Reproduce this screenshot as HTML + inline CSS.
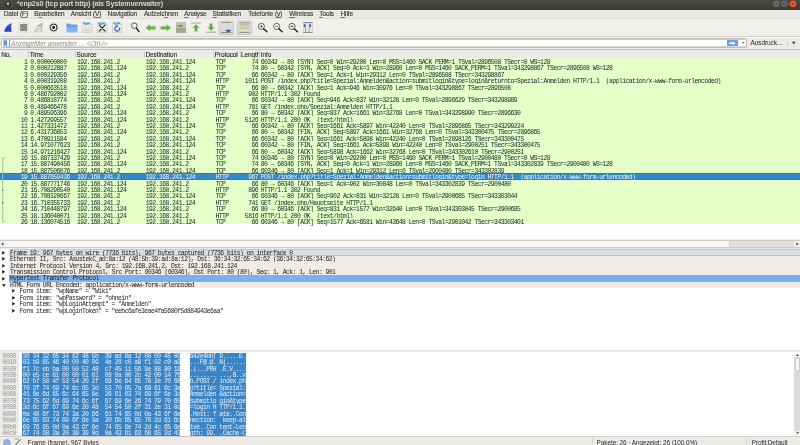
<!DOCTYPE html>
<html><head><meta charset="utf-8"><style>
html,body{margin:0;padding:0;width:800px;height:445px;overflow:hidden;background:#edebe7;position:relative;font-family:"Liberation Sans",sans-serif;}
.abs{position:absolute;}
#title{position:absolute;left:0;top:0;width:800px;height:9.6px;background:linear-gradient(#4b4a46,#3c3b37);}
#title .t{position:absolute;left:16.9px;top:-0.4px;font:bold 7.1px "Liberation Sans";letter-spacing:-0.1px;color:#dcd8cf;white-space:nowrap;line-height:8px;}
#menu{position:absolute;left:0;top:9.6px;width:800px;height:8.8px;background:#ebe9e5;}
#mline{position:absolute;left:0;top:18.1px;width:800px;height:1px;background:#e2dfda;}
#menu span{position:absolute;top:0.4px;font:6.5px "Liberation Sans";letter-spacing:-0.12px;color:#303030;white-space:nowrap;line-height:7px;-webkit-text-stroke:0.1px #303030;}
#menu u{text-decoration:underline;text-decoration-thickness:0.4px;text-underline-offset:0.6px;text-decoration-color:#777;}
#toolbar{position:absolute;left:0;top:19px;width:800px;height:17.2px;background:linear-gradient(#f3f2ef,#efedea);}
#tbline{position:absolute;left:0;top:36.1px;width:800px;height:1px;background:#d3d0cb;box-shadow:0 1px 0 #f8f6f3;}
#filter{position:absolute;left:1.0px;top:38.4px;width:745.5px;height:9.8px;box-sizing:border-box;border:1px solid #bfbcb7;background:#fff;border-radius:1.5px;box-shadow:inset 0 1px 0 #d2cfca,inset 0 -1px 0 #dcd9d4;}
#hdrline{position:absolute;left:0;top:49.2px;width:800px;height:1px;background:#c9c6c1;}
#hdr{position:absolute;left:0;top:50.2px;width:800px;height:7.6px;background:#edebe7;border-bottom:0.6px solid #cfccc7;}
#hdr span{position:absolute;top:0.4px;font:6.5px "Liberation Sans";letter-spacing:-0.09px;color:#262626;white-space:nowrap;line-height:7px;-webkit-text-stroke:0.1px #262626;}
#hdr i{position:absolute;top:0;width:0.5px;height:7.6px;background:#d3d0cb;}
#plist{position:absolute;left:0;top:58.0px;width:800px;height:181.4px;background:#fff;overflow:hidden;}
.r{position:absolute;left:0;width:800px;height:6.404px;background:#e4ffc7;color:#12272e;font:6.4px "Liberation Mono";letter-spacing:-0.549px;line-height:6.404px;white-space:nowrap;}
.r span{position:absolute;top:0;}
.r.sel{background:#348ac9;color:#e6f0fa;box-shadow:inset 0 1px 0 #2a7bc3,inset 0 -1px 0 #2a7bc3;}
.c0{right:772.8px;text-align:right;}
.c1{left:30.3px;}
.c2{left:77px;}
.c3{left:145.8px;}
.c4{left:215.4px;}
.c5{right:542px;text-align:right;}
.c6{left:260.8px;}
#hscroll{position:absolute;left:0;top:239.7px;width:800px;height:8.6px;background:#f0eeeb;border-top:0.5px solid #d0cdc8;box-sizing:border-box;}
#details{position:absolute;left:0;top:248.6px;width:800px;height:101.2px;background:#fff;overflow:hidden;}
.d{position:absolute;left:0;width:800px;height:6.45px;font:6.4px "Liberation Mono";letter-spacing:-0.549px;line-height:6.45px;color:#1e1e1e;white-space:nowrap;}
.d .bg{position:absolute;left:9px;right:0;top:0;bottom:0;}
.d .tx{position:absolute;left:10px;top:0;}
.d .ar{position:absolute;left:2.2px;top:1.6px;width:0;height:0;border-left:3px solid #222;border-top:1.6px solid transparent;border-bottom:1.6px solid transparent;}
#splitter{position:absolute;left:0;top:349.8px;width:800px;height:1.7px;background:#e6e3de;}
#hex{position:absolute;left:0;top:351.5px;width:800px;height:84.5px;background:#fff;overflow:hidden;}
#hexoff{position:absolute;left:0;top:0;width:18.9px;height:84.5px;background:#edebe8;}
.hr{position:absolute;left:0;width:794px;height:6.45px;font:6.4px "Liberation Mono";letter-spacing:-0.549px;line-height:6.45px;white-space:nowrap;}
.ho{position:absolute;left:2.6px;color:#979797;}
.hx{position:absolute;left:21.8px;width:157.2px;background:#3b84c6;color:#e3edf8;padding-left:0.8px;}
.ha{position:absolute;left:189.6px;width:55.8px;background:#3b84c6;color:#e3edf8;padding-left:0.2px;}
#vscroll{position:absolute;left:794.2px;top:352.8px;width:5.8px;height:82.7px;background:#dcdad5;}
#status{position:absolute;left:0;top:436px;width:800px;height:9px;background:#edebe7;border-top:0.6px solid #d3d0cb;box-sizing:border-box;}
#status span{position:absolute;top:1.5px;font:6.4px "Liberation Sans";letter-spacing:-0.06px;color:#2c2c2c;white-space:nowrap;line-height:7px;}
#root{position:absolute;left:0;top:0;width:800px;height:445px;will-change:transform;overflow:hidden;}
#filter .ph{position:absolute;left:9.3px;top:0.5px;font:italic 6.3px "Liberation Sans";color:#8a8a8a;white-space:nowrap;line-height:7px;}
.ausd{left:750.6px;top:39.1px;font:6.4px "Liberation Sans";letter-spacing:-0.05px;color:#262626;white-space:nowrap;line-height:7px;}
.d .ar.dn{left:1.6px;top:2.2px;border-left:1.7px solid transparent;border-right:1.7px solid transparent;border-top:2.4px solid #222;border-bottom:0;}
.r span{padding-top:2.0px;}
.hr span{white-space:pre;}
.hr span{padding-top:1.0px;}
.d .tx{padding-top:1.2px;white-space:pre;}
.r span{white-space:pre;}

</style></head><body>
<div id="root">
<div id="title">
 <svg class="abs" style="left:4.5px;top:1.2px" width="6" height="6" viewBox="0 0 6 6"><circle cx="3" cy="3" r="2.6" fill="#2e2d2a"/><circle cx="3" cy="2.6" r="1.2" fill="#d8d5cf"/></svg>
 <div class="t">*enp2s0 (tcp port http) (als Systemverwalter)</div>
 <svg class="abs" style="left:770px;top:0" width="30" height="9" viewBox="770 0 30 9"><circle cx="776.4" cy="3.75" r="3.35" fill="#6a6965" stroke="#5a5955" stroke-width="0.3"/><rect x="774.9" y="3.5" width="3" height="0.55" fill="#3f3e3a"/><circle cx="784.4" cy="3.75" r="3.35" fill="#6a6965" stroke="#5a5955" stroke-width="0.3"/><rect x="783.3" y="2.6" width="2.2" height="2.3" fill="none" stroke="#3f3e3a" stroke-width="0.5"/><circle cx="792.9" cy="3.75" r="3.35" fill="#ee5a2c" stroke="#d84c20" stroke-width="0.3"/><path d="M791.6 2.45 L794.2 5.05 M794.2 2.45 L791.6 5.05" stroke="#5a2010" stroke-width="0.6"/></svg>
</div>
<div id="menu">
 <span style="left:3.75px">Datei (<u>F</u>)</span>
 <span style="left:34.25px">B<u>e</u>arbeiten</span>
 <span style="left:70.75px">Ansicht (<u>V</u>)</span>
 <span style="left:107.6px">Navigation</span>
 <span style="left:143.9px">Aufzeic<u>h</u>nen</span>
 <span style="left:184.25px"><u>A</u>nalyse</span>
 <span style="left:212.5px"><u>S</u>tatistiken</span>
 <span style="left:248.25px">Telefonie (<u>y</u>)</span>
 <span style="left:289.25px"><u>W</u>ireless</span>
 <span style="left:319.25px"><u>T</u>ools</span>
 <span style="left:340.5px"><u>H</u>ilfe</span>
</div>
<div id="toolbar"></div>
<div id="mline"></div>
<svg class="abs" style="left:0;top:18.9px" width="330" height="17.4" viewBox="0 18.9 330 17.4">
 <defs>
  <linearGradient id="gfin" x1="0" y1="0" x2="0" y2="1"><stop offset="0" stop-color="#3f63e6"/><stop offset="1" stop-color="#1f36b8"/></linearGradient>
  <linearGradient id="gfold" x1="0" y1="0" x2="0" y2="1"><stop offset="0" stop-color="#5d9ee6"/><stop offset="1" stop-color="#8fc0f4"/></linearGradient>
  <linearGradient id="gdoc" x1="0" y1="0" x2="0" y2="1"><stop offset="0" stop-color="#fbfaf4"/><stop offset="1" stop-color="#e4e2d4"/></linearGradient>
  <linearGradient id="gbtn" x1="0" y1="0" x2="0" y2="1"><stop offset="0" stop-color="#e2e0dc"/><stop offset="1" stop-color="#d6d4cf"/></linearGradient>
 </defs>
 <!-- shark fin -->
 <path d="M3.75 32 C4.3 27 8 23.3 12.4 22.6 C11.2 25.5 11.1 29 12 32 Z" fill="url(#gfin)" stroke="#f4f2ea" stroke-width="0.7"/>
 <!-- stop -->
 <rect x="18.5" y="22.3" width="9.6" height="10.2" rx="1" fill="#eceae6" stroke="#d6d4cf" stroke-width="0.5"/>
 <rect x="20.1" y="23.9" width="6.9" height="7.1" fill="#8b8a87"/>
 <!-- restart fin (grey) -->
 <linearGradient id="grst" x1="0" y1="0" x2="1" y2="1"><stop offset="0" stop-color="#a9a7a3"/><stop offset="1" stop-color="#d2d0cc"/></linearGradient>
 <path d="M34 32.4 C34.6 27.5 38.3 23.4 43.5 22.1 C42.2 25.5 42.1 29 42.9 32.4 Z" fill="url(#grst)" stroke="#e9e7e3" stroke-width="0.6"/>
 <circle cx="38.5" cy="29.1" r="1.65" fill="none" stroke="#fbfbfb" stroke-width="1.1"/>
 <circle cx="38.6" cy="29.3" r="0.55" fill="#8e8c88"/>
  <!-- options -->
 <circle cx="53.6" cy="27.4" r="4.9" fill="#d3d1cd"/>
 <circle cx="53.6" cy="27.4" r="3.35" fill="#fafafa" stroke="#222" stroke-width="1.0"/>
 <circle cx="53.6" cy="27.4" r="1.45" fill="#151515"/>
 <!-- sep -->
 <rect x="62.2" y="22.5" width="0.5" height="10" fill="#dad7d2"/>
 <!-- folder -->
 <path d="M66.5 23.6 h3.6 l0.8 1 h6.3 v7.6 h-10.7 z" fill="url(#gfold)" stroke="#6ea4e2" stroke-width="0.3"/>
 <rect x="66.5" y="25.6" width="10.7" height="0.5" fill="#4d8fd8"/>
 <!-- doc 1 -->
 <path d="M82.3 22.2 h7.6 l2 2 v8.3 h-9.6 z" fill="url(#gdoc)" stroke="#c2c0b5" stroke-width="0.5"/>
 <path d="M82.6 22.45 h7.2 l1.8 1.8 v0.5 c-1.2 0.1 -2 -0.7 -3.2 -0.6 c-1 0.1 -1.2 0.7 -2.1 0.7 c-0.9 0 -1.6 -0.5 -2.5 -0.4 z" fill="#4f9fe6"/>
 <path d="M85.0 22.45 l1 1.3 l1 -1.3 z" fill="#eaf4fc"/>
 <path d="M89.89999999999999 22.2 v2 h2" fill="#f4f3ec" stroke="#c2c0b5" stroke-width="0.4"/>
 <g fill="#c9c7bb"><rect x="83.6" y="26.5" width="2.2" height="0.5"/><rect x="86.4" y="26.5" width="3.6" height="0.5"/><rect x="83.6" y="28.4" width="3.2" height="0.5"/><rect x="87.4" y="28.4" width="2.6" height="0.5"/><rect x="83.6" y="30.3" width="2.6" height="0.5"/><rect x="86.8" y="30.3" width="3.2" height="0.5"/></g>
 <!-- doc close -->
 <path d="M97.3 22.2 h7.6 l2 2 v8.3 h-9.6 z" fill="url(#gdoc)" stroke="#c2c0b5" stroke-width="0.5"/>
 <path d="M97.6 22.45 h7.2 l1.8 1.8 v0.5 c-1.2 0.1 -2 -0.7 -3.2 -0.6 c-1 0.1 -1.2 0.7 -2.1 0.7 c-0.9 0 -1.6 -0.5 -2.5 -0.4 z" fill="#4f9fe6"/>
 <path d="M100.0 22.45 l1 1.3 l1 -1.3 z" fill="#eaf4fc"/>
 <path d="M104.89999999999999 22.2 v2 h2" fill="#f4f3ec" stroke="#c2c0b5" stroke-width="0.4"/>
 <path d="M99.3 25.1 L105 31.1 M105 25.1 L99.3 31.1" stroke="#1c1c1c" stroke-width="1.05" stroke-linecap="round"/>
 <!-- doc reload -->
 <path d="M112.5 22.2 h7.6 l2 2 v8.3 h-9.6 z" fill="url(#gdoc)" stroke="#c2c0b5" stroke-width="0.5"/>
 <path d="M112.8 22.45 h7.2 l1.8 1.8 v0.5 c-1.2 0.1 -2 -0.7 -3.2 -0.6 c-1 0.1 -1.2 0.7 -2.1 0.7 c-0.9 0 -1.6 -0.5 -2.5 -0.4 z" fill="#4f9fe6"/>
 <path d="M115.2 22.45 l1 1.3 l1 -1.3 z" fill="#eaf4fc"/>
 <path d="M120.1 22.2 v2 h2" fill="#f4f3ec" stroke="#c2c0b5" stroke-width="0.4"/>
 <path d="M117.03 26.01 A2.5 2.5 0 1 0 119.52 27.44" fill="none" stroke="#2f5fb3" stroke-width="1.1"/>
 <path d="M116.73 24.81 l1.9 1.2 l-1.9 1.2 z" fill="#2f5fb3"/>
 <!-- sep -->
 <rect x="126.2" y="22.5" width="0.5" height="10" fill="#dad7d2"/>
 <!-- find -->
 <circle cx="134.3" cy="25.6" r="2.8" fill="#f4f4f4" stroke="#2a2a2a" stroke-width="0.8"/>
 <path d="M136.3 27.9 L138.9 31.6" stroke="#1a1a1a" stroke-width="1.3" stroke-linecap="round"/>
 <!-- back -->
 <path d="M145.5 27.7 l4.4 -3.5 v1.9 h5.7 v3.2 h-5.7 v1.9 z" fill="#5cbd14" stroke="#c4c0cc" stroke-width="0.7" stroke-linejoin="round"/>
 <!-- forward -->
 <path d="M170.9 27.7 l-4.4 -3.5 v1.9 h-5.7 v3.2 h5.7 v1.9 z" fill="#5cbd14" stroke="#c4c0cc" stroke-width="0.7" stroke-linejoin="round"/>
 <!-- goto -->
 <rect x="176" y="22.2" width="10.1" height="10.8" fill="#a9a8a4"/>
 <rect x="176.4" y="22.6" width="9.3" height="5" fill="#c3c2be"/>
 <rect x="176.5" y="29.2" width="9" height="0.4" fill="#8f8e8a"/>
 <rect x="176.5" y="31" width="9" height="0.4" fill="#9b9a96"/>
 <path d="M183.2 25.9 l-2.6 -2.5 v1.4 h-3.8 v2.3 h3.8 v1.4 z" fill="#55bb14" stroke="#c8c2d4" stroke-width="0.6" stroke-linejoin="round"/>
 <rect x="184.2" y="25" width="1.9" height="1.6" fill="#f0d848"/>
 <!-- first -->
 <rect x="191.1" y="22.5" width="9.8" height="0.9" fill="#9b9a96"/>
 <path d="M196 24.3 l3.6 3.4 h-2.2 v3.7 h-2.8 v-3.7 h-2.2 z" fill="#4fb814" stroke="#c8c2d4" stroke-width="0.8" stroke-linejoin="round"/>
 <!-- last -->
 <rect x="206" y="31.6" width="10.2" height="0.9" fill="#9b9a96"/>
 <path d="M211.1 30.6 l3.6 -3.4 h-2.2 v-3.7 h-2.8 v3.7 h-2.2 z" fill="#4fb814" stroke="#c8c2d4" stroke-width="0.8" stroke-linejoin="round"/>
 <!-- autoscroll pressed -->
 <rect x="218.8" y="20.8" width="14.8" height="13.8" rx="1.2" fill="url(#gbtn)" stroke="#bebcb7" stroke-width="0.6"/>
 <rect x="221.2" y="22.2" width="10" height="0.6" fill="#555"/>
 <rect x="221.2" y="32" width="10" height="0.6" fill="#555"/>
 <path d="M225.7 29.7 h5.4 l-1.3 2.1 h-2.8 z" fill="#2a5fb5"/>
 <!-- colorize pressed -->
 <rect x="237" y="20.8" width="14.9" height="13.8" rx="1.2" fill="url(#gbtn)" stroke="#bebcb7" stroke-width="0.6"/>
 <rect x="239.4" y="22.3" width="10.4" height="0.8" fill="#7c8a88"/>
 <rect x="239.4" y="23.1" width="10.4" height="1.8" fill="#f2a6a0"/>
 <rect x="239.4" y="24.9" width="10.4" height="0.9" fill="#8ec4f2"/>
 <rect x="239.4" y="25.8" width="10.4" height="1.6" fill="#b9ef9e"/>
 <rect x="239.4" y="27.4" width="10.4" height="1.0" fill="#a9c0ee"/>
 <rect x="239.4" y="28.4" width="10.4" height="1.0" fill="#c6aee4"/>
 <rect x="239.4" y="29.4" width="10.4" height="2.4" fill="#efdf9e"/>
 <rect x="239.4" y="31.8" width="10.4" height="0.8" fill="#767f88"/>
 <!-- zoom in / out / reset -->
 <g fill="#f6f6f6" stroke="#2a2a2a" stroke-width="0.7">
  <circle cx="261.4" cy="26.3" r="3.1"/>
  <circle cx="276.7" cy="26.3" r="3.1"/>
  <circle cx="292" cy="26.3" r="3.1"/>
 </g>
 <g stroke="#1a1a1a" stroke-width="1.3" stroke-linecap="round">
  <path d="M263.6 28.6 L267 31.7"/><path d="M278.9 28.6 L282.3 31.7"/><path d="M294.2 28.6 L297.6 31.7"/>
 </g>
 <g stroke="#333" stroke-width="0.6">
  <path d="M259.7 26.3 h3.4 M261.4 24.6 v3.4"/><path d="M275 26.3 h3.4"/>
 </g>
 <rect x="290.6" y="25.6" width="2.8" height="1.4" fill="#555"/>
 <!-- resize columns -->
 <rect x="303" y="22.1" width="9.9" height="10.7" fill="#ebe9e5"/>
 <rect x="303" y="22.1" width="9.9" height="0.8" fill="#7d7c79"/>
 <rect x="303" y="32" width="9.9" height="0.8" fill="#7d7c79"/>
 <rect x="303" y="22.1" width="0.4" height="10.7" fill="#b5b4b0"/>
 <rect x="312.5" y="22.1" width="0.4" height="10.7" fill="#b5b4b0"/>
 <rect x="305.1" y="22.1" width="0.7" height="10.7" fill="#8a8986"/>
 <rect x="308.9" y="22.1" width="0.7" height="10.7" fill="#8a8986"/>
 <path d="M303.8 24 h0.6 a1.6 1.6 0 0 1 0 3.1 h-0.6 z" fill="#2f66c0"/>
 <path d="M311.1 24 h-0.6 a1.6 1.6 0 0 0 0 3.1 h0.6 z" fill="#2f66c0"/>
</svg>

<div id="tbline"></div>
<div id="filter">
 <div class="abs" style="left:7.1px;top:0.2px;width:0.7px;height:7.4px;background:#9d9a95"></div>
 <svg class="abs" style="left:0.6px;top:0.5px" width="5" height="7" viewBox="0 0 5 7"><path d="M0.5 0.2 h3.6 v6.3 l-1.8 -1.3 l-1.8 1.3 z" fill="#5d9ae0"/></svg>
 <span class="ph">Anzeigefilter anwenden … &lt;Ctrl-/&gt;</span>
 <div class="abs" style="left:725px;top:0.8px;width:10.8px;height:6.2px;background:#6d9fdc;border-radius:0.6px"></div>
 <svg class="abs" style="left:727px;top:1.7px" width="7" height="4.5" viewBox="0 0 7 4.5"><path d="M0.3 1.5 h3.6 v-1.2 l2.6 1.95 l-2.6 1.95 v-1.2 h-3.6 z" fill="#fff"/></svg>
 <svg class="abs" style="left:740.3px;top:2.9px" width="3" height="2" viewBox="0 0 3 2"><path d="M0 0 h2.6 l-1.3 1.6 z" fill="#444"/></svg>
</div>
<span class="abs ausd">Ausdruck…</span>
<div class="abs" style="left:787.4px;top:41px;width:0.5px;height:5px;background:#d3d0cb"></div>
<svg class="abs" style="left:792.3px;top:41.2px" width="3.4" height="3.4" viewBox="0 0 3.4 3.4"><path d="M1.7 0.2 v3 M0.2 1.7 h3" stroke="#333" stroke-width="0.9"/></svg>
<div id="hdrline"></div>
<div id="hdr">
 <span style="left:1.2px">No.</span><i style="left:28.2px"></i>
 <span style="left:29.7px">Time</span><i style="left:74.6px"></i>
 <span style="left:76.6px">Source</span><i style="left:144.4px"></i>
 <span style="left:145.4px">Destination</span><i style="left:213px"></i>
 <span style="left:214.6px">Protocol</span><i style="left:239.6px"></i>
 <span style="left:241px">Length</span><i style="left:259.4px"></i>
 <span style="left:260.8px">Info</span>
</div>
<div id="plist">
<div class="r" style="top:0.00px"><span class="c0">1</span><span class="c1">0.000000000</span><span class="c2">192.168.241.2</span><span class="c3">192.168.241.124</span><span class="c4">TCP</span><span class="c5">74</span><span class="c6">60342 → 80 [SYN] Seq=0 Win=29200 Len=0 MSS=1460 SACK_PERM=1 TSval=2896508 TSecr=0 WS=128</span></div>
<div class="r" style="top:6.40px"><span class="c0">2</span><span class="c1">0.000212887</span><span class="c2">192.168.241.124</span><span class="c3">192.168.241.2</span><span class="c4">TCP</span><span class="c5">74</span><span class="c6">80 → 60342 [SYN, ACK] Seq=0 Ack=1 Win=28960 Len=0 MSS=1460 SACK_PERM=1 TSval=343298867 TSecr=2896508 WS=128</span></div>
<div class="r" style="top:12.81px"><span class="c0">3</span><span class="c1">0.000229356</span><span class="c2">192.168.241.2</span><span class="c3">192.168.241.124</span><span class="c4">TCP</span><span class="c5">66</span><span class="c6">60342 → 80 [ACK] Seq=1 Ack=1 Win=29312 Len=0 TSval=2896508 TSecr=343298867</span></div>
<div class="r" style="top:19.21px"><span class="c0">4</span><span class="c1">0.000319208</span><span class="c2">192.168.241.2</span><span class="c3">192.168.241.124</span><span class="c4">HTTP</span><span class="c5">1011</span><span class="c6">POST /index.php?title=Spezial:Anmelden&amp;action=submitlogin&amp;type=login&amp;returnto=Spezial:Anmelden HTTP/1.1  (application/x-www-form-urlencoded)</span></div>
<div class="r" style="top:25.62px"><span class="c0">5</span><span class="c1">0.000663518</span><span class="c2">192.168.241.124</span><span class="c3">192.168.241.2</span><span class="c4">TCP</span><span class="c5">66</span><span class="c6">80 → 60342 [ACK] Seq=1 Ack=946 Win=30976 Len=0 TSval=343298867 TSecr=2896508</span></div>
<div class="r" style="top:32.02px"><span class="c0">6</span><span class="c1">0.486792002</span><span class="c2">192.168.241.124</span><span class="c3">192.168.241.2</span><span class="c4">HTTP</span><span class="c5">902</span><span class="c6">HTTP/1.1 302 Found</span></div>
<div class="r" style="top:38.42px"><span class="c0">7</span><span class="c1">0.486818774</span><span class="c2">192.168.241.2</span><span class="c3">192.168.241.124</span><span class="c4">TCP</span><span class="c5">66</span><span class="c6">60342 → 80 [ACK] Seq=946 Ack=837 Win=32128 Len=0 TSval=2896629 TSecr=343298989</span></div>
<div class="r" style="top:44.83px"><span class="c0">8</span><span class="c1">0.489466478</span><span class="c2">192.168.241.2</span><span class="c3">192.168.241.124</span><span class="c4">HTTP</span><span class="c5">781</span><span class="c6">GET /index.php/Spezial:Anmelden HTTP/1.1</span></div>
<div class="r" style="top:51.23px"><span class="c0">9</span><span class="c1">0.489596396</span><span class="c2">192.168.241.124</span><span class="c3">192.168.241.2</span><span class="c4">TCP</span><span class="c5">66</span><span class="c6">80 → 60342 [ACK] Seq=837 Ack=1661 Win=32768 Len=0 TSval=343298990 TSecr=2896630</span></div>
<div class="r" style="top:57.64px"><span class="c0">10</span><span class="c1">1.427299557</span><span class="c2">192.168.241.124</span><span class="c3">192.168.241.2</span><span class="c4">HTTP</span><span class="c5">5126</span><span class="c6">HTTP/1.1 200 OK  (text/html)</span></div>
<div class="r" style="top:64.04px"><span class="c0">11</span><span class="c1">1.427331472</span><span class="c2">192.168.241.2</span><span class="c3">192.168.241.124</span><span class="c4">TCP</span><span class="c5">66</span><span class="c6">60342 → 80 [ACK] Seq=1661 Ack=5897 Win=42240 Len=0 TSval=2896865 TSecr=343299224</span></div>
<div class="r" style="top:70.44px"><span class="c0">12</span><span class="c1">6.431736853</span><span class="c2">192.168.241.124</span><span class="c3">192.168.241.2</span><span class="c4">TCP</span><span class="c5">66</span><span class="c6">80 → 60342 [FIN, ACK] Seq=5897 Ack=1661 Win=32768 Len=0 TSval=343300475 TSecr=2896865</span></div>
<div class="r" style="top:76.85px"><span class="c0">13</span><span class="c1">6.470911584</span><span class="c2">192.168.241.2</span><span class="c3">192.168.241.124</span><span class="c4">TCP</span><span class="c5">66</span><span class="c6">60342 → 80 [ACK] Seq=1661 Ack=5898 Win=42240 Len=0 TSval=2898126 TSecr=343300475</span></div>
<div class="r" style="top:83.25px"><span class="c0">14</span><span class="c1">14.971077623</span><span class="c2">192.168.241.2</span><span class="c3">192.168.241.124</span><span class="c4">TCP</span><span class="c5">66</span><span class="c6">60342 → 80 [FIN, ACK] Seq=1661 Ack=5898 Win=42240 Len=0 TSval=2900251 TSecr=343300475</span></div>
<div class="r" style="top:89.66px"><span class="c0">15</span><span class="c1">14.971216427</span><span class="c2">192.168.241.124</span><span class="c3">192.168.241.2</span><span class="c4">TCP</span><span class="c5">66</span><span class="c6">80 → 60342 [ACK] Seq=5898 Ack=1662 Win=32768 Len=0 TSval=343302610 TSecr=2900251</span></div>
<div class="r" style="top:96.06px"><span class="c0">16</span><span class="c1">15.887337429</span><span class="c2">192.168.241.2</span><span class="c3">192.168.241.124</span><span class="c4">TCP</span><span class="c5">74</span><span class="c6">60346 → 80 [SYN] Seq=0 Win=29200 Len=0 MSS=1460 SACK_PERM=1 TSval=2900480 TSecr=0 WS=128</span></div>
<div class="r" style="top:102.46px"><span class="c0">17</span><span class="c1">15.887490456</span><span class="c2">192.168.241.124</span><span class="c3">192.168.241.2</span><span class="c4">TCP</span><span class="c5">74</span><span class="c6">80 → 60346 [SYN, ACK] Seq=0 Ack=1 Win=28960 Len=0 MSS=1460 SACK_PERM=1 TSval=343302839 TSecr=2900480 WS=128</span></div>
<div class="r" style="top:108.87px"><span class="c0">18</span><span class="c1">15.887506076</span><span class="c2">192.168.241.2</span><span class="c3">192.168.241.124</span><span class="c4">TCP</span><span class="c5">66</span><span class="c6">60346 → 80 [ACK] Seq=1 Ack=1 Win=29312 Len=0 TSval=2900480 TSecr=343302839</span></div>
<div class="r sel" style="top:115.27px"><span class="c0">19</span><span class="c1">15.887659436</span><span class="c2">192.168.241.2</span><span class="c3">192.168.241.124</span><span class="c4">HTTP</span><span class="c5">967</span><span class="c6">POST /index.php?title=Spezial:Anmelden&amp;action=submitlogin&amp;type=login HTTP/1.1  (application/x-www-form-urlencoded)</span></div>
<div class="r" style="top:121.68px"><span class="c0">20</span><span class="c1">15.887771746</span><span class="c2">192.168.241.124</span><span class="c3">192.168.241.2</span><span class="c4">TCP</span><span class="c5">66</span><span class="c6">80 → 60346 [ACK] Seq=1 Ack=902 Win=30848 Len=0 TSval=343302839 TSecr=2900480</span></div>
<div class="r" style="top:128.08px"><span class="c0">21</span><span class="c1">16.708290540</span><span class="c2">192.168.241.124</span><span class="c3">192.168.241.2</span><span class="c4">HTTP</span><span class="c5">896</span><span class="c6">HTTP/1.1 302 Found</span></div>
<div class="r" style="top:134.48px"><span class="c0">22</span><span class="c1">16.708320667</span><span class="c2">192.168.241.2</span><span class="c3">192.168.241.124</span><span class="c4">TCP</span><span class="c5">66</span><span class="c6">60346 → 80 [ACK] Seq=902 Ack=831 Win=32128 Len=0 TSval=2900685 TSecr=343303044</span></div>
<div class="r" style="top:140.89px"><span class="c0">23</span><span class="c1">16.710355733</span><span class="c2">192.168.241.2</span><span class="c3">192.168.241.124</span><span class="c4">HTTP</span><span class="c5">741</span><span class="c6">GET /index.php/Hauptseite HTTP/1.1</span></div>
<div class="r" style="top:147.29px"><span class="c0">24</span><span class="c1">16.710448797</span><span class="c2">192.168.241.124</span><span class="c3">192.168.241.2</span><span class="c4">TCP</span><span class="c5">66</span><span class="c6">80 → 60346 [ACK] Seq=831 Ack=1577 Win=32640 Len=0 TSval=343303045 TSecr=2900685</span></div>
<div class="r" style="top:153.70px"><span class="c0">25</span><span class="c1">18.136040071</span><span class="c2">192.168.241.124</span><span class="c3">192.168.241.2</span><span class="c4">HTTP</span><span class="c5">5816</span><span class="c6">HTTP/1.1 200 OK  (text/html)</span></div>
<div class="r" style="top:160.10px"><span class="c0">26</span><span class="c1">18.136074516</span><span class="c2">192.168.241.2</span><span class="c3">192.168.241.124</span><span class="c4">TCP</span><span class="c5">66</span><span class="c6">60346 → 80 [ACK] Seq=1577 Ack=6581 Win=43648 Len=0 TSval=2901042 TSecr=343303401</span></div>
 <svg class="abs" style="left:0;top:0" width="10" height="170" viewBox="0 58.3 10 170">
  <path d="M5.4 158.3 H2.7 V222 H5.4" fill="none" stroke="#7d8878" stroke-width="0.55"/>
  <rect x="2.1" y="189.8" width="1.3" height="1.3" fill="#4b5b78"/>
  <rect x="2.1" y="202.4" width="1.3" height="1.3" fill="#4b5b78"/>
  <rect x="2.45" y="174" width="0.6" height="6.2" fill="#c9dcef"/>
 </svg>
</div>
<div id="hscroll">
 <div class="abs" style="left:0;top:6.7px;width:800px;height:1px;background:#cfccc7"></div>
 <div class="abs" style="left:6px;top:0.6px;width:723.4px;height:6.1px;background:#f8f7f5;border-right:0.5px solid #d8d5d0"></div>
 <div class="abs" style="left:729.9px;top:0.6px;width:64.5px;height:6.1px;background:#e2dfdb"></div>
 <svg class="abs" style="left:0.9px;top:1.6px" width="3" height="4" viewBox="0 0 3 4"><path d="M2.4 0.2 v3.4 l-2 -1.7 z" fill="#333"/></svg>
 <svg class="abs" style="left:796px;top:1.6px" width="3" height="4" viewBox="0 0 3 4"><path d="M0.5 0.2 v3.4 l2 -1.7 z" fill="#333"/></svg>
</div>
<div id="details">
<div class="d" style="top:0.90px"><div class="bg" style="background:#d6dee6;box-shadow:inset 0 1px 0 #bfcad4,inset 0 -1px 0 #b8c3cc"></div><svg class="abs" style="left:2.20px;top:1.4px" width="4" height="4" viewBox="0 0 4 4"><path d="M0.2 0 L3.1 1.85 L0.2 3.7 Z" fill="#1a1a1a"/></svg><span class="tx" style="left:10.00px">Frame 19: 967 bytes on wire (7736 bits), 967 bytes captured (7736 bits) on interface 0</span></div>
<div class="d" style="top:7.33px"><div class="bg" style="background:#efebe6"></div><svg class="abs" style="left:2.20px;top:1.4px" width="4" height="4" viewBox="0 0 4 4"><path d="M0.2 0 L3.1 1.85 L0.2 3.7 Z" fill="#1a1a1a"/></svg><span class="tx" style="left:10.00px">Ethernet II, Src: AsustekC_ad:8a:12 (48:5b:39:ad:8a:12), Dst: 36:34:32:65:34:62 (36:34:32:65:34:62)</span></div>
<div class="d" style="top:13.76px"><div class="bg" style="background:#efebe6"></div><svg class="abs" style="left:2.20px;top:1.4px" width="4" height="4" viewBox="0 0 4 4"><path d="M0.2 0 L3.1 1.85 L0.2 3.7 Z" fill="#1a1a1a"/></svg><span class="tx" style="left:10.00px">Internet Protocol Version 4, Src: 192.168.241.2, Dst: 192.168.241.124</span></div>
<div class="d" style="top:20.19px"><div class="bg" style="background:#efebe6"></div><svg class="abs" style="left:2.20px;top:1.4px" width="4" height="4" viewBox="0 0 4 4"><path d="M0.2 0 L3.1 1.85 L0.2 3.7 Z" fill="#1a1a1a"/></svg><span class="tx" style="left:10.00px">Transmission Control Protocol, Src Port: 60346 (60346), Dst Port: 80 (80), Seq: 1, Ack: 1, Len: 901</span></div>
<div class="d" style="top:26.62px"><div class="bg" style="background:#79b0f2"></div><svg class="abs" style="left:2.20px;top:1.4px" width="4" height="4" viewBox="0 0 4 4"><path d="M0.2 0 L3.1 1.85 L0.2 3.7 Z" fill="#1a1a1a"/></svg><span class="tx" style="left:10.00px">Hypertext Transfer Protocol</span></div>
<div class="d" style="top:33.05px"><div class="bg" style="background:#efebe6"></div><svg class="abs" style="left:1.60px;top:2px" width="4" height="4" viewBox="0 0 4 4"><path d="M0 0.3 L3.7 0.3 L1.85 3.1 Z" fill="#1a1a1a"/></svg><span class="tx" style="left:10.00px">HTML Form URL Encoded: application/x-www-form-urlencoded</span></div>
<div class="d" style="top:39.48px"><svg class="abs" style="left:11.70px;top:1.4px" width="4" height="4" viewBox="0 0 4 4"><path d="M0.2 0 L3.1 1.85 L0.2 3.7 Z" fill="#1a1a1a"/></svg><span class="tx" style="left:19.50px">Form item: "wpName" = "Wiki"</span></div>
<div class="d" style="top:45.91px"><svg class="abs" style="left:11.70px;top:1.4px" width="4" height="4" viewBox="0 0 4 4"><path d="M0.2 0 L3.1 1.85 L0.2 3.7 Z" fill="#1a1a1a"/></svg><span class="tx" style="left:19.50px">Form item: "wpPassword" = "ohnein"</span></div>
<div class="d" style="top:52.34px"><svg class="abs" style="left:11.70px;top:1.4px" width="4" height="4" viewBox="0 0 4 4"><path d="M0.2 0 L3.1 1.85 L0.2 3.7 Z" fill="#1a1a1a"/></svg><span class="tx" style="left:19.50px">Form item: "wpLoginAttempt" = "Anmelden"</span></div>
<div class="d" style="top:58.77px"><svg class="abs" style="left:11.70px;top:1.4px" width="4" height="4" viewBox="0 0 4 4"><path d="M0.2 0 L3.1 1.85 L0.2 3.7 Z" fill="#1a1a1a"/></svg><span class="tx" style="left:19.50px">Form item: "wpLoginToken" = "eebc6afe3eae4fa5680f5d884943e6aa"</span></div>
</div>
<div id="splitter"></div>
<div id="hex">
 <div id="hexoff"></div>
<div class="hr" style="top:1.10px"><span class="ho">0000</span><span class="hx">36 34 32 65 34 62 48 5b  39 ad 8a 12 08 00 45 00</span><span class="ha">642e4bH[ 9.....E.</span></div>
<div class="hr" style="top:7.55px"><span class="ho">0010</span><span class="hx">03 b9 85 46 40 00 40 06  4e 28 c0 a8 f1 02 c0 a8</span><span class="ha">...F@.@. N(......</span></div>
<div class="hr" style="top:14.00px"><span class="ho">0020</span><span class="hx">f1 7c eb ba 00 50 52 48  c7 45 11 56 9e 88 80 18</span><span class="ha">.|...PRH .E.V....</span></div>
<div class="hr" style="top:20.45px"><span class="ho">0030</span><span class="hx">00 e5 ce 81 00 00 01 01  08 0a 00 2c 42 00 14 76</span><span class="ha">........ ...,B..v</span></div>
<div class="hr" style="top:26.90px"><span class="ho">0040</span><span class="hx">62 b7 50 4f 53 54 20 2f  69 6e 64 65 78 2e 70 68</span><span class="ha">b.POST / index.ph</span></div>
<div class="hr" style="top:33.35px"><span class="ho">0050</span><span class="hx">70 3f 74 69 74 6c 65 3d  53 70 65 7a 69 61 6c 3a</span><span class="ha">p?title= Spezial:</span></div>
<div class="hr" style="top:39.80px"><span class="ho">0060</span><span class="hx">41 6e 6d 65 6c 64 65 6e  26 61 63 74 69 6f 6e 3d</span><span class="ha">Anmelden &amp;action=</span></div>
<div class="hr" style="top:46.25px"><span class="ho">0070</span><span class="hx">73 75 62 6d 69 74 6c 6f  67 69 6e 26 74 79 70 65</span><span class="ha">submitlo gin&amp;type</span></div>
<div class="hr" style="top:52.70px"><span class="ho">0080</span><span class="hx">3d 6c 6f 67 69 6e 20 48  54 54 50 2f 31 2e 31 0d</span><span class="ha">=login H TTP/1.1.</span></div>
<div class="hr" style="top:59.15px"><span class="ho">0090</span><span class="hx">0a 48 6f 73 74 3a 20 66  61 74 65 0d 0a 43 6f 6e</span><span class="ha">.Host: f ate..Con</span></div>
<div class="hr" style="top:65.60px"><span class="ho">00a0</span><span class="hx">6e 65 63 74 69 6f 6e 3a  20 6b 65 65 70 2d 61 6c</span><span class="ha">nection:  keep-al</span></div>
<div class="hr" style="top:72.05px"><span class="ho">00b0</span><span class="hx">69 76 65 0d 0a 43 6f 6e  74 65 6e 74 2d 4c 65 6e</span><span class="ha">ive..Con tent-Len</span></div>
<div class="hr" style="top:78.50px"><span class="ho">00c0</span><span class="hx">67 74 68 3a 20 39 39 0d  0a 43 61 63 68 65 2d 43</span><span class="ha">gth: 99. .Cache-C</span></div>
</div>
<div id="vscroll">
 <div class="abs" style="left:0;top:0;width:5.8px;height:4.5px;background:#f3f1ee"></div>
 <svg class="abs" style="left:1.4px;top:1.3px" width="3.2" height="2.2" viewBox="0 0 3.2 2.2"><path d="M0.1 2 h3 l-1.5 -1.8 z" fill="#333"/></svg>
 <div class="abs" style="left:0.4px;top:5.6px;width:5px;height:12.4px;background:#f7f6f4;border:0.4px solid #cfccc7;box-sizing:border-box"></div>
 <div class="abs" style="left:0;top:78.2px;width:5.8px;height:4.5px;background:#f3f1ee"></div>
 <svg class="abs" style="left:1.4px;top:79.4px" width="3.2" height="2.2" viewBox="0 0 3.2 2.2"><path d="M0.1 0.2 h3 l-1.5 1.8 z" fill="#333"/></svg>
</div>
<div id="status">
 <svg class="abs" style="left:2.6px;top:1.6px" width="8" height="8" viewBox="0 0 8 8"><circle cx="3.9" cy="3.9" r="3.3" fill="#8db8e8" stroke="#5b8fd0" stroke-width="0.6"/></svg>
 <svg class="abs" style="left:13.5px;top:1px" width="8" height="8" viewBox="0 0 8 8"><path d="M1.5 6.8 L6.4 1.4" stroke="#333" stroke-width="0.9"/><path d="M0.6 1.0 h4.2" stroke="#4aa0e0" stroke-width="0.8"/></svg>
 <span style="left:27.6px">Frame (frame), 967 Bytes</span>
 <div class="abs" style="left:592px;top:1.4px;width:0.5px;height:6px;background:#d3d0cb"></div>
 <span style="left:596.6px">Pakete: 26 · Angezeigt: 26 (100.0%)</span>
 <div class="abs" style="left:745.8px;top:1.4px;width:0.5px;height:6px;background:#d3d0cb"></div>
 <span style="left:751.8px">Profil:Default</span>
</div>
</div>

</body></html>
